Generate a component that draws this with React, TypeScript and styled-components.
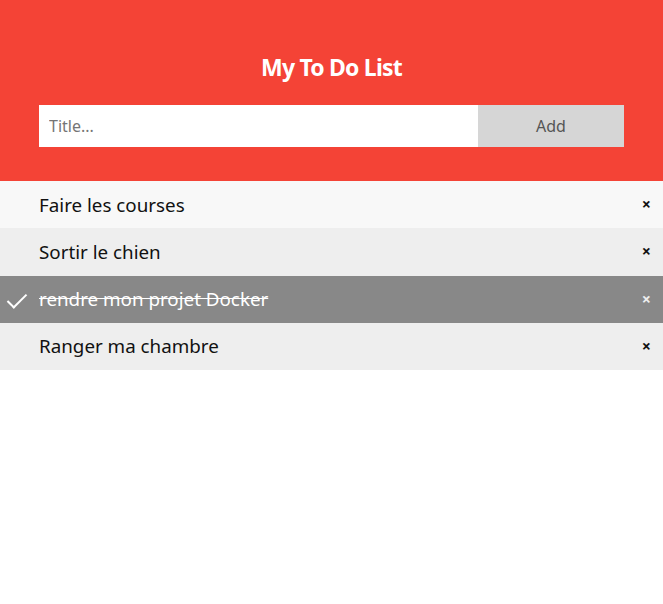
import { useState } from 'react';
import styled, { createGlobalStyle } from 'styled-components';

const GlobalStyle = createGlobalStyle`
  html, body {
    margin: 0;
    padding: 0;
    background: #fff;
  }
  * {
    box-sizing: border-box;
  }
`;

const Page = styled.div`
  font-family: 'Noto Sans', 'Liberation Sans', sans-serif;
  width: 663px;
`;

const Header = styled.div`
  background-color: #f44336;
  padding: 53px 39px 34px;
  color: #fff;
  text-align: center;
`;

const Title = styled.h2`
  margin: 0 0 23px;
  font-size: 23px;
  line-height: 29px;
  font-weight: 700;
  letter-spacing: -0.8px;
`;

const Form = styled.div`
  display: flex;
  height: 42px;
`;

const TitleInput = styled.input`
  flex: 1;
  margin: 0;
  border: none;
  border-radius: 0;
  padding: 10px;
  font-family: inherit;
  font-size: 16px;
  color: #333;
  background: #fff;
  outline: none;

  &::placeholder {
    color: #757575;
  }
`;

const AddButton = styled.span`
  width: 146px;
  display: flex;
  align-items: center;
  justify-content: center;
  background: #d6d6d6;
  color: #555;
  font-size: 16px;
  cursor: pointer;
`;

const List = styled.ul`
  margin: 0;
  padding: 0;
  list-style: none;
`;

const Item = styled.li<{ $checked: boolean }>`
  position: relative;
  display: flex;
  align-items: center;
  height: 47.25px;
  padding: 1px 8px 0 39px;
  font-size: 18.8px;
  line-height: 23px;
  cursor: pointer;
  background: ${(p) => (p.$checked ? '#888' : '#eee')};
  color: ${(p) => (p.$checked ? '#fff' : '#111')};
  text-decoration: ${(p) => (p.$checked ? 'line-through' : 'none')};

  &:nth-child(odd) {
    background: ${(p) => (p.$checked ? '#888' : '#f8f8f8')};
  }
`;

const Check = styled.span`
  position: absolute;
  left: 12px;
  top: 13px;
  width: 10px;
  height: 19px;
  border-style: solid;
  border-color: #fff;
  border-width: 0 2px 2px 0;
  transform: rotate(45deg);
`;

const Close = styled.span<{ $checked: boolean }>`
  position: absolute;
  right: 12px;
  top: 0;
  height: 100%;
  display: flex;
  align-items: center;
  font-size: 16px;
  font-weight: 700;
  text-decoration: none;
  color: ${(p) => (p.$checked ? '#eee' : '#111')};
`;

const initialTasks = [
  { title: 'Faire les courses', checked: false },
  { title: 'Sortir le chien', checked: false },
  { title: 'rendre mon projet Docker', checked: true },
  { title: 'Ranger ma chambre', checked: false },
];

export default function App() {
  const [tasks, setTasks] = useState(initialTasks);
  const [title, setTitle] = useState('');

  const toggle = (i: number) =>
    setTasks((t) => t.map((task, j) => (j === i ? { ...task, checked: !task.checked } : task)));

  const add = () => {
    if (!title.trim()) return;
    setTasks((t) => [...t, { title, checked: false }]);
    setTitle('');
  };

  return (
    <Page>
      <GlobalStyle />
      <Header>
        <Title>My To Do List</Title>
        <Form>
          <TitleInput
            placeholder="Title..."
            value={title}
            onChange={(e) => setTitle(e.target.value)}
          />
          <AddButton onClick={add}>Add</AddButton>
        </Form>
      </Header>
      <List>
        {tasks.map((task, i) => (
          <Item key={i} $checked={task.checked} onClick={() => toggle(i)}>
            {task.checked && <Check />}
            {task.title}
            <Close
              $checked={task.checked}
              onClick={(e) => {
                e.stopPropagation();
                setTasks((t) => t.filter((_, j) => j !== i));
              }}
            >
              ×
            </Close>
          </Item>
        ))}
      </List>
    </Page>
  );
}
